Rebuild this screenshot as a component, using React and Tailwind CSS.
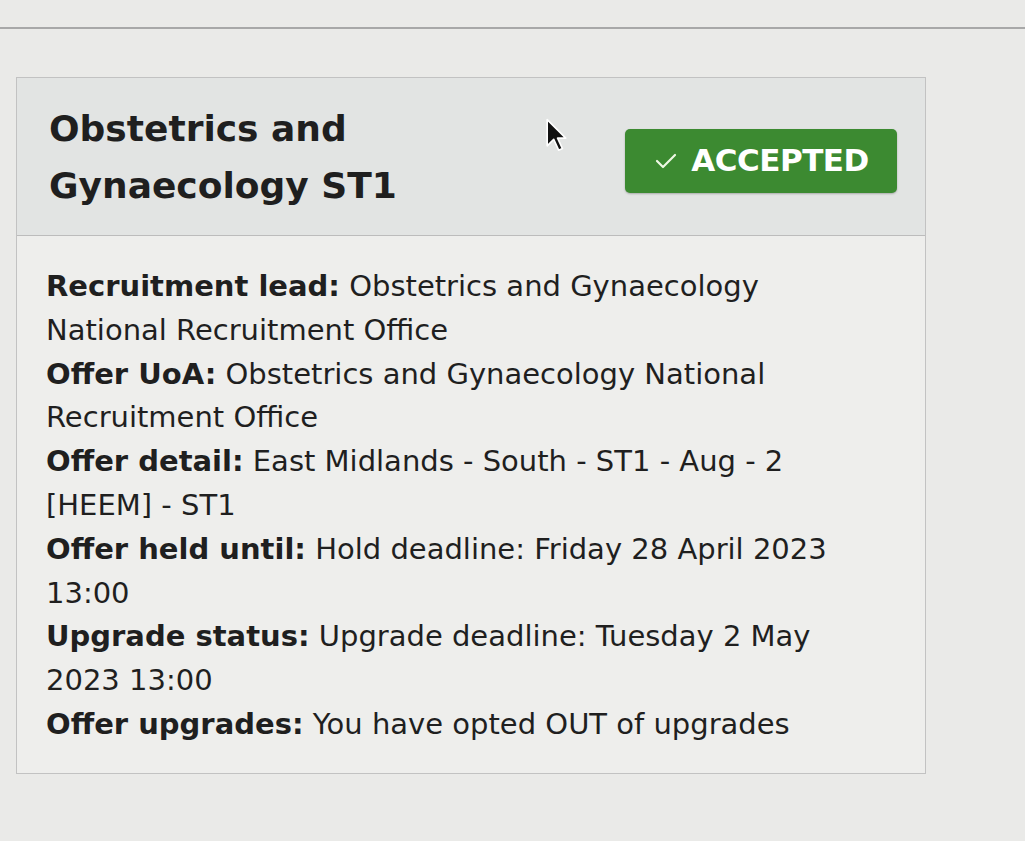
import React from 'react';

const rows = [
    { label: 'Recruitment lead:', value: 'Obstetrics and Gynaecology National Recruitment Office' },
    { label: 'Offer UoA:', value: 'Obstetrics and Gynaecology National Recruitment Office' },
    { label: 'Offer detail:', value: 'East Midlands - South - ST1 - Aug - 2 [HEEM] - ST1' },
    { label: 'Offer held until:', value: 'Hold deadline: Friday 28 April 2023 13:00' },
    { label: 'Upgrade status:', value: 'Upgrade deadline: Tuesday 2 May 2023 13:00' },
    { label: 'Offer upgrades:', value: 'You have opted OUT of upgrades' },
];

const Cursor = () => (
    <svg width="24" height="38" viewBox="0 0 22 34" className="absolute left-[545px] top-[117px]">
        <path d="M2 2 L2 26 L8 20 L12.5 30 L16 28.5 L11.5 19 L19 19 Z" fill="#111" stroke="#fff" strokeWidth="1.5" strokeLinejoin="round" />
    </svg>
);

export default function App() {
    return (
        <div className="relative min-h-[841px] bg-[#eaeae8] pt-[27px] text-[#1f1f1f]" style={{ fontFamily: '"DejaVu Sans", Verdana, sans-serif' }}>
            <div className="border-t-2 border-[#a8a8a8]" />
            <div className="pl-[16px] pt-[48px]">
                <div className="w-[910px] border border-[#c2c2c2] bg-[#eeeeec]">
                    <div className="flex h-[158px] items-center justify-between border-b border-[#bcbcbc] bg-[#e2e4e3] pl-[32px] pr-[28px]">
                        <h2 className="text-[36px] font-bold leading-[57px]">
                            Obstetrics and
                            <br />
                            Gynaecology ST1
                        </h2>
                        <div className="mt-[8px] flex h-[64px] w-[272px] items-center justify-center gap-[12px] rounded-[5px] bg-[#3c8a31] text-white shadow-[0_1px_2px_rgba(0,0,0,0.25)]">
                            <svg width="26" height="20" viewBox="0 0 26 20" fill="none">
                                <path d="M4 10 L10 16 L22 4" stroke="#eef8e4" strokeWidth="2.2" strokeLinecap="round" strokeLinejoin="round" />
                            </svg>
                            <span className="text-[31px] font-bold tracking-[-0.5px]">ACCEPTED</span>
                        </div>
                    </div>
                    <div className="w-[845px] pl-[29px] pt-[29px] pb-[26px] text-[29px] leading-[43.8px]">
                        {rows.map((r) => (
                            <p key={r.label}>
                                <span className="font-bold">{r.label}</span> {r.value}
                            </p>
                        ))}
                    </div>
                </div>
            </div>
            <Cursor />
        </div>
    );
}
